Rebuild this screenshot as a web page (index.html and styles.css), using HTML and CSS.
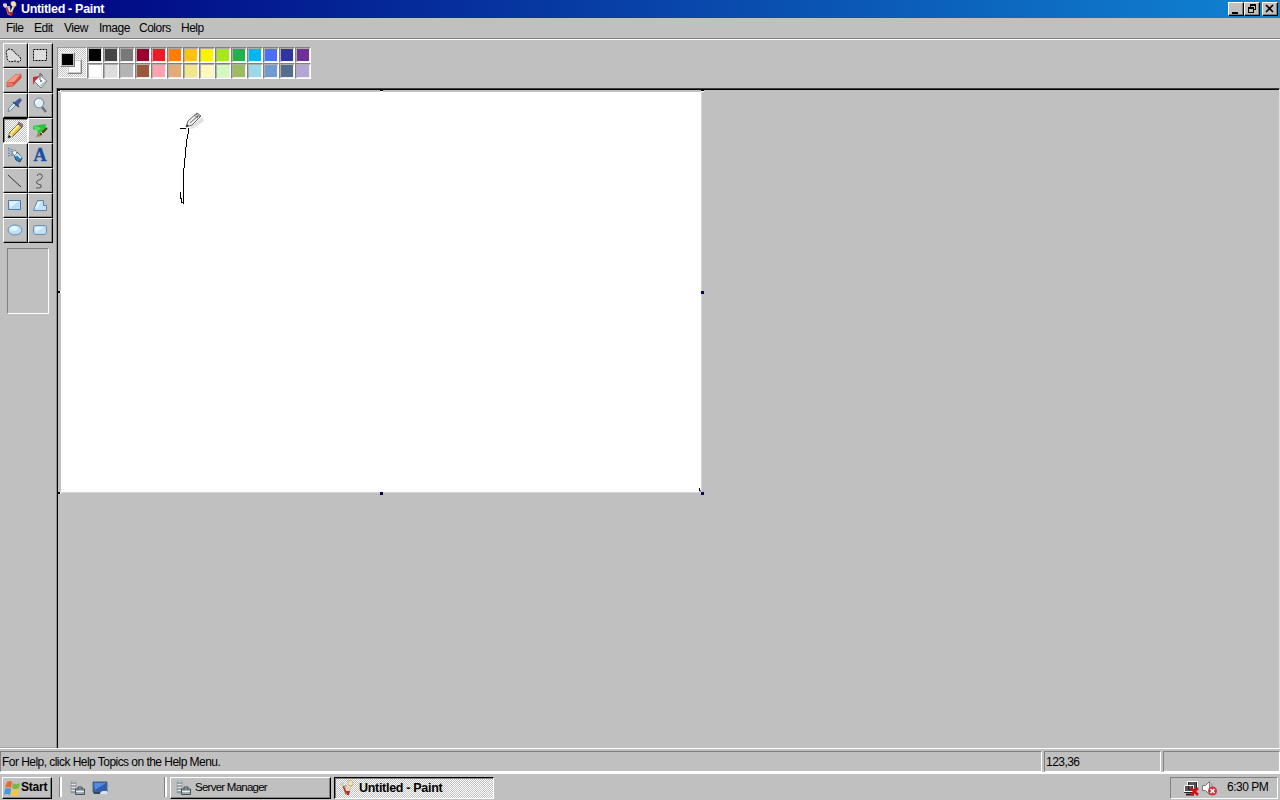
FILE: index.html
```
<!DOCTYPE html>
<html lang="en">
<head>
    <meta charset="UTF-8">
    <meta name="viewport" content="width=device-width, initial-scale=1.0">
    <title>Untitled - Paint</title>
    <link rel="stylesheet" href="styles.css">
</head>
<body>
    <svg class="defs" width="0" height="0">
        <symbol id="paint" viewBox="0 0 16 16">
            <path d="M3 5l3 9h3l-1-9z" fill="#c0b898"/>
            <path d="M3 5l2 1 3 7-1 2z" fill="#b7312c"/>
            <path d="M13 5l-4 9H7l4-10z" fill="#d9b36b"/>
            <path d="M9 1l3-1 2 2v3l-3 1-2-2z" fill="#f2e6b1" stroke="#b29861" stroke-width=".6"/>
            <path d="M1 3l2-1 2 1v3l-2 1-2-2z" fill="#d6cec5"/>
            <path d="M7 11h4l-1 4H8z" fill="#b22a22"/>
            <path d="M7 7l1 4M11 6l-2 5" stroke="#eee" fill="none"/>
        </symbol>
        <symbol id="server" viewBox="0 0 16 16">
            <path d="M2 1h5v12H2z" fill="#dfe3e5" stroke="#a4abae"/>
            <path d="M2 3h5M2 6h5M2 9h5M2 12h4" stroke="#596970"/>
            <path d="M9 9V7h4v2" fill="none" stroke="#404a50"/>
            <path d="M6.500 9h9v5.500h-9z" fill="#9daab0" stroke="#455157"/>
            <path d="M7 11.500h8M11 10.500v2" stroke="#e9eef0"/>
        </symbol>
    </svg>

    <div class="titlebar">
        <svg class="app-icon" width="16" height="16"><use href="#paint"/></svg>
        <span class="title">Untitled - Paint</span>
        <div class="window-buttons">
            <button class="win-btn"><svg width="14" height="12"><path d="M3 9h6v2H3z"/></svg></button>
            <button class="win-btn restore"><svg width="14" height="12"><path d="M5 1h6v6H9V6h1V3H6v1H5zM3 4h6v6H3zM4 6v3h4V6z" fill-rule="evenodd"/></svg></button>
            <button class="win-btn"><svg width="14" height="12"><path d="M3 2l7 7M10 2l-7 7" stroke="#000" stroke-width="1.600"/></svg></button>
        </div>
    </div>

    <div class="menubar">
        <span class="m-file">File</span>
        <span class="m-edit">Edit</span>
        <span class="m-view">View</span>
        <span class="m-image">Image</span>
        <span class="m-colors">Colors</span>
        <span class="m-help">Help</span>
    </div>

    <div class="main">
        <div class="toolbox">
            <div class="tools">
                <button class="tool"><svg width="22" height="22"><path d="M5 5l5 1 2 3 5 4 1 3-2 2-4-1-5 1-3-3V12l-1-4z" fill="#ddd" stroke="#000" stroke-dasharray="2 1"/></svg></button>
                <button class="tool"><svg width="22" height="22"><path d="M5.500 5.500h13v11h-13z" fill="#ddd" stroke="#000" stroke-dasharray="2 1"/></svg></button>
                <button class="tool"><svg width="22" height="22"><path d="M4 13l8-7 6-1v4l-8 8-6 1z" fill="#d9543f" stroke="#b9503f" stroke-width=".7"/><path d="M4 13l8-7 6-1-7 8z" fill="#f49b81"/><path d="M4 13l6 1v4l-6-1z" fill="#e77661"/></svg></button>
                <button class="tool"><svg width="22" height="22"><path d="M6 12l6-6 7 6-6 7z" fill="#f4f7f7" stroke="#738080"/><path d="M5 16V8l7-1-5 5z" fill="#bd3434"/><path d="M13 18l6-7-2 1-5 4z" fill="#b5c3c5"/><circle cx="13" cy="12" r="1" fill="#666"/><path d="M12 11V4l3 3" fill="none" stroke="#666"/></svg></button>
                <button class="tool"><svg width="22" height="22"><path d="M5 18l1-4 7-7 2 2-7 7z" fill="#d5edf7" stroke="#607789" stroke-width=".8"/><path d="M11 9l4 4 1-3 3-4-2-2-3 2z" fill="#45589d"/><path d="M10 8l6 5" stroke="#34466f" stroke-width="1.500"/></svg></button>
                <button class="tool"><svg width="22" height="22"><path d="M14 13l4 5" stroke="#68737e" stroke-width="2.500"/><circle cx="11" cy="9" r="4.800" fill="#e1f0f8" stroke="#8197a9" stroke-width="1.300"/><path d="M8 9q0-3 3-3" fill="none" stroke="#fff" stroke-width="1.500"/></svg></button>
                <button class="tool active"><svg width="22" height="22"><path d="M5 19l2-6 8-8 4 3-9 9z" fill="#e8c546" stroke="#4c4125" stroke-width=".8"/><path d="M8 14l8-8" stroke="#fff199" stroke-width="2"/><path d="M5 19l2-5 3 3z" fill="#eee2c4"/><path d="M5 19l1-3 2 2z"/><path d="M15 5l1-2 4 3-1 2z" fill="#9b758b" stroke="#59444e" stroke-width=".7"/></svg></button>
                <button class="tool"><svg width="22" height="22"><path d="M5 7l6-1 7-1-1 8-7 2-1-4-4-1z" fill="#26c63c"/><path d="M5 7l9 2-5 3z" fill="#62dc67"/><path d="M12 16l7-7" stroke="#5a3521" stroke-width="2"/><path d="M10 14l4 3-6 1z" fill="#b7793d"/><path d="M13 13l2 2" stroke="#eee"/></svg></button>
                <button class="tool"><svg width="22" height="22"><path d="M11 11l3-3 5 6-2 4-4-2z" fill="#337eb4" stroke="#204d72"/><path d="M12 12l2-2 4 4" fill="none" stroke="#c4eaff" stroke-width="2"/><path d="M9 8l3-2 2 3-3 3z" fill="#f4f4f4" stroke="#666" stroke-width=".7"/><path d="M5 6l4 2M5 9l4 1M5 4l5 2M5 12l5-1" stroke="#4580be" stroke-dasharray="2 1"/></svg></button>
                <button class="tool text-tool">A</button>
                <button class="tool"><svg width="22" height="22"><path d="M5 6l13 12" stroke="#333"/></svg></button>
                <button class="tool"><svg width="22" height="22"><path d="M9 7q1-3 4-2 3 2 0 5l-4 2q-2 2 1 3l3 1q1 3-2 3h-3" fill="none" stroke="#555"/></svg></button>
                <button class="tool"><svg width="22" height="22"><path d="M5.500 6.500h12v9h-12z" fill="#b9dcfa" stroke="#507c9f"/><path d="M6 7h10l-9 7z" fill="#e2f3ff"/></svg></button>
                <button class="tool"><svg width="22" height="22"><path d="M9.500 6.500h6v5h3v5h-13z" fill="#c4e2fa" stroke="#5d86a4"/><path d="M10 8h3l-4 6H7z" fill="#e8f6ff"/></svg></button>
                <button class="tool"><svg width="22" height="22"><ellipse cx="12" cy="11" rx="7" ry="5" fill="#bfdffa" stroke="#6590b2"/><ellipse cx="11" cy="9.500" rx="4" ry="2.500" fill="#e4f5ff"/></svg></button>
                <button class="tool"><svg width="22" height="22"><rect x="5.500" y="6.500" width="13" height="9" rx="2.500" fill="#bfdffa" stroke="#6590b2"/><path d="M7 8h9l-8 5z" fill="#e4f5ff"/></svg></button>
            </div>
            <div class="tool-options"></div>
        </div>

        <div class="content">
            <div class="palette">
                <div class="current-colors"><span class="background"></span><span class="foreground"></span></div>
                <div class="colors" id="colors"></div>
            </div>
            <div class="workspace">
                <div class="canvas">
                    <svg width="640" height="400">
                        <path d="M119 36.500h6M127.500 36v4l-2 9-1 13-1 9-1 10v31M119.500 100v6l1 1v3h2" fill="none" stroke="#000" shape-rendering="crispEdges"/>
                        <path d="M128 36l13-11 2 4-12 8z" fill="#ccc" opacity=".6"/>
                        <path d="M125 35l2-6 9-8 4 3-9 9z" fill="#eee" stroke="#666"/>
                        <path d="M129 31l8-7M133 23l4 3M135 22l4 3" stroke="#666"/>
                        <path d="M125 35l1-3 2 2z" fill="#333"/>
                        <path d="M638.500 396v3h2" fill="none" stroke="#000"/>
                    </svg>
                    <i class="handle tl"></i><i class="handle tm"></i><i class="handle tr"></i>
                    <i class="handle ml"></i><i class="handle mr"></i>
                    <i class="handle bl"></i><i class="handle bm"></i><i class="handle br"></i>
                </div>
            </div>
        </div>
    </div>

    <div class="statusbar">
        <div class="help-text"><span>For Help, click Help Topics on the Help Menu.</span></div>
        <div class="position">123,36</div>
        <div class="size"></div>
    </div>

    <div class="taskbar">
        <button class="start">
            <svg width="17" height="17" viewBox="0 0 17 17"><path d="M3 2q3-2 5 0L7 8Q4 6 1 8z" fill="#ed6730"/><path d="M9 3q3 2 7 0l-1 5q-4 2-7 0z" fill="#78b846"/><path d="M1 9q3-2 6 0l-1 6q-3-2-6 0z" fill="#4c97db"/><path d="M8 9q3 2 7 0l-1 6q-4 2-7 0z" fill="#f4c73c"/></svg>
            <span>Start</span>
        </button>
        <i class="grip"></i>
        <div class="quick">
            <svg width="16" height="16"><use href="#server"/></svg>
            <svg width="16" height="16"><path d="M1 2h14v10H1z" fill="#315fae" stroke="#4a6583"/><path d="M2 3h12L3 10z" fill="#548bdc"/><path d="M8 14h7v-3h-5z" fill="#d4e5f2"/><path d="M1 12h7v2H2z" fill="#34475c"/></svg>
        </div>
        <i class="grip"></i>
        <button class="task"><svg width="16" height="16"><use href="#server"/></svg><span>Server Manager</span></button>
        <button class="task selected"><svg width="16" height="16"><use href="#paint"/></svg><span>Untitled - Paint</span></button>
        <div class="tray">
            <svg width="17" height="17"><path d="M5.500 1.500h8v8h-8zM1.500 5.500h8v7h-8z" fill="#555" stroke="#222"/><path d="M4.500 5V1.500h10V9M1.500 12V5.500h9v6h-9" fill="none" stroke="#fff"/><path d="M3 14.500h8" stroke="#222" stroke-width="2"/><path d="M8 8l7 7M15 8l-7 7" stroke="#d30f19" stroke-width="2.500"/></svg>
            <svg width="17" height="17"><path d="M1.500 5.500h3l4-4v13l-4-4h-3z" fill="#fff" stroke="#777"/><path d="M10 3q3 3 0 8" fill="none" stroke="#999"/><circle cx="11.500" cy="11" r="4.500" fill="#d3333b"/><path d="M9.500 9l4 4M13.500 9l-4 4" stroke="#fff" stroke-width="1.500"/></svg>
            <span>6:30 PM</span>
        </div>
    </div>

    <script>
        const colors = [
            '#000000', '#464646', '#787878', '#990030', '#ed1c24', '#ff7e00', '#ffc20e', '#fff200', '#a8e61d', '#22b14c', '#00b7ef', '#4d6df3', '#2f3699', '#6f3198',
            '#ffffff', '#dcdcdc', '#b4b4b4', '#9c5a3c', '#ffa3b1', '#e5aa7a', '#f0e68c', '#fff9bd', '#d3f9bc', '#9dbb61', '#99d9ea', '#709ad1', '#546d8e', '#b5a5d5'
        ];
        const palette = document.getElementById('colors');
        colors.forEach(color => {
            const swatch = document.createElement('span');
            swatch.className = 'swatch';
            swatch.style.backgroundColor = color;
            palette.appendChild(swatch);
        });
    </script>
</body>
</html>
```
FILE: styles.css
```
* { box-sizing: border-box; }
body {
    margin: 0;
    width: 1280px;
    height: 800px;
    overflow: hidden;
    display: flex;
    flex-direction: column;
    background: #c0c0c0;
    color: #000;
    font-family: "Liberation Sans", Arial, sans-serif;
    font-size: 12px;
    line-height: 14px;
}
button { margin: 0; padding: 0; border: 0; border-radius: 0; background: #c0c0c0; color: #000; font: inherit; }
svg { display: block; flex: none; }
.defs { position: absolute; }

.titlebar { height: 18px; flex: none; display: flex; align-items: center; padding: 0 2px; background: linear-gradient(90deg, #000080, #1084d0); color: #fff; }
.app-icon { margin-right: 3px; }
.title { font-size: 12.5px; font-weight: bold; line-height: 16px; letter-spacing: -0.32px; }
.window-buttons { display: flex; margin-left: auto; }
.win-btn { width: 16px; height: 14px; overflow: hidden; border: 1px solid; border-color: #fff #000 #000 #fff; box-shadow: inset -1px -1px #808080; }
.restore { margin-right: 2px; }

.menubar { height: 21px; flex: none; display: flex; padding: 3px 6px 0; border-bottom: 1px solid #808080; }
.menubar span { flex: none; letter-spacing: -0.5px; }
.m-file { width: 28px; }
.m-edit { width: 30px; }
.m-view { width: 35px; }
.m-image { width: 40px; }
.m-colors { width: 42px; }

.main { flex: 1; min-height: 0; display: flex; border-top: 1px solid #fff; }
.toolbox { width: 57px; flex: none; padding: 3px 0 0 3px; border-bottom: 1px solid #a8a8a8; }
.tools { width: 50px; display: grid; grid-template-columns: 25px 25px; grid-auto-rows: 25px; }
.tool { width: 25px; height: 25px; display: flex; align-items: flex-start; justify-content: flex-start; border: 1px solid; border-color: #fff #000 #000 #fff; box-shadow: inset -1px -1px #909090; overflow: hidden; }
.tool svg { margin: 0 0 0 -1px; }
.tool.active { border-color: #000 #fff #fff #000; background: repeating-conic-gradient(#fff 0 25%, #c0c0c0 0 50%) 0 0 / 2px 2px; box-shadow: inset 1px 1px #808080; }
.text-tool { justify-content: center; padding-right: 1px; font: bold 18px/22px "Liberation Serif", serif; -webkit-text-stroke: 0.4px #164da5; color: #164da5; }
.tool-options { width: 42px; height: 66px; margin: 5px 0 0 4px; border: 1px solid; border-color: #808080 #fff #fff #808080; }

.content { flex: 1; min-width: 0; display: flex; flex-direction: column; }
.palette { height: 48px; flex: none; display: flex; padding-top: 7px; }
.current-colors { position: relative; width: 30px; height: 31px; border: 1px solid; border-color: #999 #fff #fff #999; background: repeating-conic-gradient(#fff 0 25%, #c0c0c0 0 50%) 0 0 / 2px 2px; }
.foreground, .background { position: absolute; width: 15px; height: 15px; border: 1px solid; border-color: #eee #808080 #808080 #eee; }
.foreground { left: 2px; top: 4px; background: #000; box-shadow: inset 0 0 0 1px #c0c0c0; }
.background { left: 9px; top: 11px; background: #fff; box-shadow: inset 0 0 0 1px #ccc; }
.colors { display: grid; grid-template-columns: repeat(14, 16px); grid-auto-rows: 16px; }
.swatch { border: 1px solid; border-color: #808080 #fff #fff #808080; box-shadow: inset 1px 1px #b0aca8, inset -1px -1px #eee; }

.workspace { flex: 1; min-height: 0; border-top: 1px solid #404040; border-left: 1px solid #000; border-right: 1px solid #ddd; padding: 3px 0 0 3px; box-shadow: inset 0 1px #000, -1px 0 #909090; }
.canvas { position: relative; width: 640px; height: 400px; background: #fff; box-shadow: 1px 0 #d6d6d6, 0 1px #d6d6d6; }
.handle { position: absolute; width: 3px; height: 3px; background: #000050; }
.tl, .tm, .tr { top: -2px; height: 2px; border-bottom: 1px solid #fff; background: #000; }
.tl, .ml, .bl { left: -3px; border-right: 1px solid #fff; background: #000; }
.ml, .bl { height: 2px; }
.tm, .bm { left: 319px; }
.tr, .mr, .br { left: 640px; }
.ml, .mr { top: 199px; }
.bl, .bm, .br { top: 400px; }

.statusbar { height: 25px; flex: none; display: flex; gap: 2px; padding: 2px 0 2px; border-top: 1px solid #fff; border-bottom: 1px solid #fff; }
.statusbar > div { height: 21px; padding: 3px 1px; border: 1px solid; border-color: #808080 #fff #fff #808080; letter-spacing: -0.54px; }
.help-text { width: 1042px; }
.position { width: 117px; }
.size { flex: 1; }

.taskbar { height: 27px; flex: none; display: flex; padding: 3px 2px 2px; border-top: 1px solid #fff; letter-spacing: -0.5px; }
.start, .task { height: 22px; display: flex; align-items: center; border: 1px solid; border-color: #fff #000 #000 #fff; box-shadow: inset -1px -1px #808080; }
.start { width: 50px; padding-left: 1px; font-weight: bold; }
.start span { margin: -2px 0 0; letter-spacing: -0.2px; }
.grip { width: 3px; height: 20px; margin: 0 0 0 7px; border-left: 1px solid #808080; border-right: 2px solid #fff; }
.quick { width: 95px; display: flex; align-items: center; gap: 7px; padding-left: 7px; }
.quick + .grip { margin-left: 7px; }
.task { width: 161px; margin-left: 3px; padding-left: 4px; }
.task span { margin: -2px 0 0 4px; font-size: 11.5px; letter-spacing: -0.75px; }
.task.selected { width: 160px; background: repeating-conic-gradient(#fff 0 25%, #c0c0c0 0 50%) 0 0 / 2px 2px; border-color: #000 #fff #fff #000; box-shadow: inset 1px 1px #808080; }
.task.selected span { margin-top: 0; font-size: 12.5px; font-weight: bold; letter-spacing: -0.3px; }
.tray { width: 108px; height: 22px; margin-left: auto; display: flex; align-items: center; gap: 1px; padding-left: 12px; border: 1px solid; border-color: #808080 #fff #fff #808080; }
.tray span { margin: -2px 0 0 8px; white-space: nowrap; }
```
